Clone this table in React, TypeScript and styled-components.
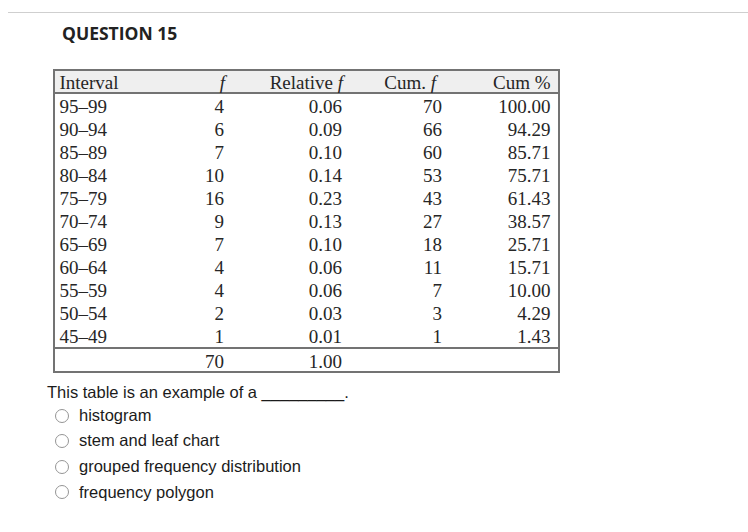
import React from 'react';
import styled, { createGlobalStyle } from 'styled-components';

const GlobalStyle = createGlobalStyle`
  html, body {
    margin: 0;
    padding: 0;
    background: #ffffff;
  }
`;

const Page = styled.div`
  padding-top: 12px;
  min-height: 520px;
`;

const TopRule = styled.div`
  margin-left: 8px;
  border-top: 1px solid #cfcfcf;
`;

const Content = styled.div`
  padding-left: 47px;
`;

const Heading = styled.h2`
  margin: 10px 0 0 15px;
  font-family: 'Open Sans', 'Liberation Sans', sans-serif;
  font-weight: 700;
  font-size: 17.5px;
  line-height: 20.4px;
  color: #222;
`;

const FreqTable = styled.table`
  margin: 25.5px 0 0 5.5px;
  border: 2px solid #737373;
  border-spacing: 0;
  table-layout: fixed;
  width: 507px;
  font-family: 'Liberation Serif', 'Times New Roman', serif;
  font-size: 19px;
  color: #262626;
`;

const HeadCell = styled.th<{ $align?: 'left' | 'right'; $pr?: number }>`
  background: #efefef;
  border-bottom: 2px solid #737373;
  font-weight: 400;
  text-align: ${(p) => p.$align || 'right'};
  padding: 3px ${(p) => p.$pr ?? 0}px 0 ${(p) => (p.$align === 'left' ? 5 : 0)}px;
  line-height: 17.8px;
  white-space: nowrap;
`;

const Cell = styled.td<{ $align?: 'left' | 'right'; $pr?: number }>`
  text-align: ${(p) => p.$align || 'right'};
  padding: 3px ${(p) => p.$pr ?? 0}px 1px ${(p) => (p.$align === 'left' ? 5 : 0)}px;
  line-height: 19px;
  white-space: nowrap;
`;

const TotalCell = styled(Cell)`
  border-top: 2px solid #737373;
  padding-bottom: 0.4px;
`;

const Question = styled.p`
  margin: 8.7px 0 0;
  font-family: 'Liberation Sans', Arial, sans-serif;
  font-size: 16.5px;
  line-height: 20px;
  color: #1b1b1b;
`;

const Options = styled.ul`
  list-style: none;
  margin: 1px 0 0;
  padding: 0 0 0 8px;
`;

const Option = styled.li`
  display: flex;
  align-items: center;
  gap: 10px;
  height: 25.6px;
  font-family: 'Liberation Sans', Arial, sans-serif;
  font-size: 16.5px;
  line-height: 25.6px;
  color: #1b1b1b;
`;

const Radio = styled.input`
  appearance: none;
  margin: 0;
  width: 14px;
  height: 14px;
  border: 1.5px solid #959595;
  border-radius: 50%;
  background: #fff;
  box-sizing: border-box;
`;

const rows: [string, string, string, string, string][] = [
  ['95–99', '4', '0.06', '70', '100.00'],
  ['90–94', '6', '0.09', '66', '94.29'],
  ['85–89', '7', '0.10', '60', '85.71'],
  ['80–84', '10', '0.14', '53', '75.71'],
  ['75–79', '16', '0.23', '43', '61.43'],
  ['70–74', '9', '0.13', '27', '38.57'],
  ['65–69', '7', '0.10', '18', '25.71'],
  ['60–64', '4', '0.06', '11', '15.71'],
  ['55–59', '4', '0.06', '7', '10.00'],
  ['50–54', '2', '0.03', '3', '4.29'],
  ['45–49', '1', '0.01', '1', '1.43'],
];

const choices = [
  'histogram',
  'stem and leaf chart',
  'grouped frequency distribution',
  'frequency polygon',
];

const App: React.FC = () => {
  return (
    <Page>
      <GlobalStyle />
      <TopRule />
      <Content>
        <Heading>QUESTION 15</Heading>

        <FreqTable>
          <colgroup>
            <col style={{ width: 75.5 }} />
            <col style={{ width: 100 }} />
            <col style={{ width: 120 }} />
            <col style={{ width: 100 }} />
            <col style={{ width: 107.5 }} />
          </colgroup>
          <thead>
            <tr>
              <HeadCell $align="left">Interval</HeadCell>
              <HeadCell $pr={5}><i>f</i></HeadCell>
              <HeadCell $pr={7}>Relative <i>f</i></HeadCell>
              <HeadCell $pr={14}>Cum. <i>f</i></HeadCell>
              <HeadCell $pr={7}>Cum %</HeadCell>
            </tr>
          </thead>
          <tbody>
            {rows.map(([interval, f, rel, cum, pct]) => (
              <tr key={interval}>
                <Cell $align="left">{interval}</Cell>
                <Cell $pr={6}>{f}</Cell>
                <Cell $pr={8}>{rel}</Cell>
                <Cell $pr={8}>{cum}</Cell>
                <Cell $pr={7}>{pct}</Cell>
              </tr>
            ))}
            <tr>
              <TotalCell $align="left" />
              <TotalCell $pr={6}>70</TotalCell>
              <TotalCell $pr={8}>1.00</TotalCell>
              <TotalCell $pr={8} />
              <TotalCell $pr={7} />
            </tr>
          </tbody>
        </FreqTable>

        <Question>This table is an example of a _________.</Question>
        <Options>
          {choices.map((c) => (
            <Option key={c}>
              <Radio type="radio" name="q15" aria-label={c} />
              <span>{c}</span>
            </Option>
          ))}
        </Options>
      </Content>
    </Page>
  );
};

export default App;
